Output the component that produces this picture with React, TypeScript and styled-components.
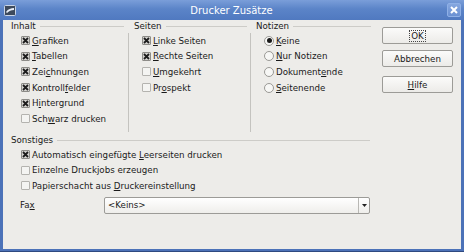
import React from 'react'
import styled, { createGlobalStyle } from 'styled-components'

const GlobalStyle = createGlobalStyle`
    html, body {
        margin: 0;
        padding: 0;
        background: #3c5c9a;
    }
    body {
        font-family: "DejaVu Sans", "Liberation Sans", sans-serif;
        font-size: 8.7px;
        color: #1a1a1a;
    }
`

const Window = styled.div`
    width: 464px;
    height: 252px;
    box-sizing: border-box;
    display: flex;
    flex-direction: column;
    background: #4c72b8;
    border-bottom: 1px solid #2f4a80;
    padding: 0 3px 2px 3px;
`

const TitleBar = styled.div`
    height: 20px;
    margin: 0 -3px;
    padding: 0 4px;
    display: flex;
    align-items: center;
    background: linear-gradient(#7a9ed9, #5b84c8 45%, #5079c0);
    color: #ffffff;
    font-size: 10px;
`

const TitleText = styled.div`
    flex: 1;
    text-align: center;
`

const CloseButton = styled.div`
    width: 14px;
    height: 14px;
    box-sizing: border-box;
    border: 1px solid #8fb0e6;
    background: linear-gradient(#86a7df, #6a90d2);
    border-radius: 2px;
    display: flex;
    align-items: center;
    justify-content: center;
    margin-right: -1px;
`

const Body = styled.div`
    flex: 1;
    background: #edece9;
    padding: 0 0 0 8px;
    display: flex;
    flex-direction: column;
`

const TopRow = styled.div`
    display: flex;
    height: 112px;
`

const Group = styled.div<{ $width: number }>`
    width: ${p => p.$width}px;
    display: flex;
    flex-direction: column;
`

const Header = styled.div<{ $lineEnd?: number }>`
    height: 12px;
    display: flex;
    align-items: center;
    margin-right: ${p => p.$lineEnd ?? 4}px;
    &::after {
        content: '';
        flex: 1;
        height: 1px;
        background: #cdccc8;
        margin-left: 4px;
        margin-top: 1px;
    }
`

const Items = styled.div<{ $indent: number }>`
    padding-left: ${p => p.$indent}px;
    padding-top: 1px;
    display: flex;
    flex-direction: column;
`

const Row = styled.div`
    height: 15.6px;
    display: flex;
    align-items: center;
    white-space: nowrap;
`

const Box = styled.div<{ $on?: boolean }>`
    width: 9px;
    height: 9px;
    box-sizing: border-box;
    border: 1px solid ${p => (p.$on ? '#8d8c88' : '#b4b3af')};
    background: ${p => (p.$on ? '#d6d5d1' : '#f4f4f2')};
    border-radius: 1px;
    margin-right: 2px;
    display: flex;
    align-items: center;
    justify-content: center;
`

const Radio = styled.div<{ $on?: boolean }>`
    width: 10px;
    height: 10px;
    box-sizing: border-box;
    border: 1px solid #9a9995;
    background: #f7f7f5;
    border-radius: 50%;
    margin-right: 2px;
    display: flex;
    align-items: center;
    justify-content: center;
    &::after {
        content: '';
        display: ${p => (p.$on ? 'block' : 'none')};
        width: 5px;
        height: 5px;
        border-radius: 50%;
        background: #1a1a1a;
    }
`

const VSep = styled.div`
    width: 1px;
    background: #c4c3bf;
    margin: 13px 5px 0 0;
`

const ButtonColumn = styled.div`
    display: flex;
    flex-direction: column;
    gap: 6px;
    margin-left: 11px;
    padding-top: 7px;
`

const Button = styled.div<{ $gapAfter?: number }>`
    width: 71px;
    height: 17px;
    box-sizing: border-box;
    border: 1px solid #9c9b97;
    border-radius: 2px;
    background: linear-gradient(#fbfbfa, #ecebe8);
    display: flex;
    align-items: center;
    justify-content: center;
    margin-bottom: ${p => p.$gapAfter ?? 0}px;
`

const Focus = styled.span`
    outline: 1px dotted #444;
    padding: 0 1px;
`

const Section = styled.div`
    width: 359px;
    display: flex;
    flex-direction: column;
    margin-top: 2px;
`

const FaxRow = styled.div`
    display: flex;
    align-items: center;
    height: 17px;
    margin-top: 3px;
    padding-left: 9px;
`

const FaxLabel = styled.div`
    width: 84px;
`

const Combo = styled.div`
    width: 266px;
    height: 17px;
    box-sizing: border-box;
    border: 1px solid #9c9b97;
    border-radius: 2px;
    background: linear-gradient(#ffffff, #efeeeb);
    display: flex;
    align-items: center;
`

const ComboText = styled.div`
    flex: 1;
    padding-left: 3px;
`

const ComboArrow = styled.div`
    width: 10px;
    height: 100%;
    border-left: 1px solid #b9b8b4;
    display: flex;
    align-items: center;
    justify-content: center;
`

const Check = () => (
    <svg width="7" height="7" viewBox="0 0 7 7">
        <path d="M1 1 L6 6 M6 1 L1 6" stroke="#1c1c1c" strokeWidth="1.8" />
    </svg>
)

const U = styled.span`
    text-decoration: underline;
    text-underline-offset: 1px;
`

type Item = { on?: boolean; label: React.ReactNode }

const CheckList = ({ items }: { items: Item[] }) => (
    <>
        {items.map((it, i) => (
            <Row key={i}>
                <Box $on={it.on}>{it.on && <Check />}</Box>
                {it.label}
            </Row>
        ))}
    </>
)

const App = () => {
    return (
        <>
            <GlobalStyle />
            <Window>
                <TitleBar>
                    <svg width="12" height="11" viewBox="0 0 12 11">
                        <rect x="0.5" y="0.5" width="11" height="10" rx="1" fill="#3d4a5c" stroke="#c9d4e6" />
                        <path d="M2 7 C4 4, 7 3, 10 3 L10 5 C7 5, 5 6, 3 8 Z" fill="#e8eef8" />
                    </svg>
                    <TitleText>Drucker Zusätze</TitleText>
                    <CloseButton>
                        <svg width="8" height="8" viewBox="0 0 8 8">
                            <path d="M1 1 L7 7 M7 1 L1 7" stroke="#ffffff" strokeWidth="2" />
                        </svg>
                    </CloseButton>
                </TitleBar>
                <Body>
                    <TopRow>
                        <Group $width={117}>
                            <Header>Inhalt</Header>
                            <Items $indent={10}>
                                <CheckList
                                    items={[
                                        { on: true, label: <span><U>G</U>rafiken</span> },
                                        { on: true, label: <span><U>T</U>abellen</span> },
                                        { on: true, label: <span>Zei<U>c</U>hnungen</span> },
                                        { on: true, label: <span>Kontroll<U>f</U>elder</span> },
                                        { on: true, label: <span>H<U>i</U>ntergrund</span> },
                                        { label: <span>Sch<U>w</U>arz drucken</span> },
                                    ]}
                                />
                            </Items>
                        </Group>
                        <VSep />
                        <Group $width={116}>
                            <Header $lineEnd={3}>Seiten</Header>
                            <Items $indent={8}>
                                <CheckList
                                    items={[
                                        { on: true, label: <span><U>L</U>inke Seiten</span> },
                                        { on: true, label: <span><U>R</U>echte Seiten</span> },
                                        { label: <span><U>U</U>mgekehrt</span> },
                                        { label: <span>Pr<U>o</U>spekt</span> },
                                    ]}
                                />
                            </Items>
                        </Group>
                        <VSep />
                        <Group $width={115}>
                            <Header $lineEnd={0}>Notizen</Header>
                            <Items $indent={8}>
                                <Row><Radio $on /><span><U>K</U>eine</span></Row>
                                <Row><Radio /><span><U>N</U>ur Notizen</span></Row>
                                <Row><Radio /><span>Dokument<U>e</U>nde</span></Row>
                                <Row><Radio /><span><U>S</U>eitenende</span></Row>
                            </Items>
                        </Group>
                        <ButtonColumn>
                            <Button><Focus>OK</Focus></Button>
                            <Button $gapAfter={3}>Abbrechen</Button>
                            <Button><span><U>H</U>ilfe</span></Button>
                        </ButtonColumn>
                    </TopRow>
                    <Section>
                        <Header $lineEnd={0}>Sonstiges</Header>
                        <Items $indent={10}>
                            <CheckList
                                items={[
                                    { on: true, label: <span>Automatisch eingefügte <U>L</U>eerseiten drucken</span> },
                                    { label: <span>Einzelne Druckjobs erzeugen</span> },
                                    { label: <span>Papierschacht aus <U>D</U>ruckereinstellung</span> },
                                ]}
                            />
                        </Items>
                        <FaxRow>
                            <FaxLabel>Fa<U>x</U></FaxLabel>
                            <Combo>
                                <ComboText>&lt;Keins&gt;</ComboText>
                                <ComboArrow>
                                    <svg width="5" height="3" viewBox="0 0 5 3">
                                        <path d="M0 0 H5 L2.5 3 Z" fill="#222" />
                                    </svg>
                                </ComboArrow>
                            </Combo>
                        </FaxRow>
                    </Section>
                </Body>
            </Window>
        </>
    )
}

export default App
